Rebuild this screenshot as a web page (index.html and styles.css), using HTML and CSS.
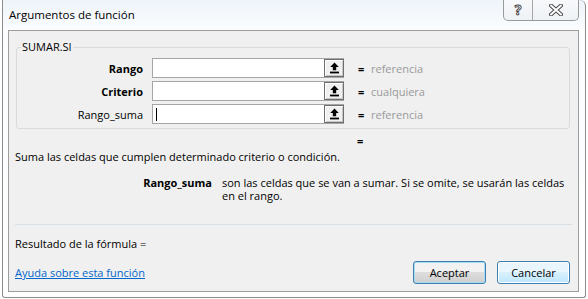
FILE: index.html
```html
<!DOCTYPE html>
<html>
<head>
  <title>Argumentos de función</title>
  <link rel="stylesheet" href="styles.css">
</head>
<body>
  <div class="window">
    <div class="titlebar">
      <span class="title">Argumentos de función</span>
      <div class="caption-buttons">
        <span class="cap-btn help">?</span>
        <span class="cap-btn close">
          <svg width="16" height="12" viewBox="0 0 16 12">
            <path d="M3 1.5 L13 10.5 M13 1.5 L3 10.5" stroke="#4a4a4a" stroke-width="4" stroke-linecap="round"/>
            <path d="M3 1.5 L13 10.5 M13 1.5 L3 10.5" stroke="#fff" stroke-width="2" stroke-linecap="round"/>
          </svg>
        </span>
      </div>
    </div>

    <div class="client">
      <fieldset class="group">
        <legend>SUMAR.SI</legend>
        <div class="arg-grid">
          <label class="arg-name strong">Rango</label>
          <div class="ref-input">
            <span class="ref-btn">
              <svg width="9" height="12" viewBox="0 0 9 12"><path d="M4.5 0.5 L8.8 5 H6.2 V8.2 H2.8 V5 H0.2 Z" fill="#000"/><rect x="0" y="9.6" width="9" height="1.8" fill="#000"/></svg>
            </span>
          </div>
          <span class="eq">=</span>
          <span class="hint">referencia</span>

          <label class="arg-name strong">Criterio</label>
          <div class="ref-input">
            <span class="ref-btn">
              <svg width="9" height="12" viewBox="0 0 9 12"><path d="M4.5 0.5 L8.8 5 H6.2 V8.2 H2.8 V5 H0.2 Z" fill="#000"/><rect x="0" y="9.6" width="9" height="1.8" fill="#000"/></svg>
            </span>
          </div>
          <span class="eq">=</span>
          <span class="hint">cualquiera</span>

          <label class="arg-name">Rango_suma</label>
          <div class="ref-input">
            <span class="caret"></span>
            <span class="ref-btn">
              <svg width="9" height="12" viewBox="0 0 9 12"><path d="M4.5 0.5 L8.8 5 H6.2 V8.2 H2.8 V5 H0.2 Z" fill="#000"/><rect x="0" y="9.6" width="9" height="1.8" fill="#000"/></svg>
            </span>
          </div>
          <span class="eq">=</span>
          <span class="hint">referencia</span>
        </div>
      </fieldset>

      <div class="result-eq">=</div>
      <p class="desc">Suma las celdas que cumplen determinado criterio o condición.</p>

      <div class="arg-help">
        <span class="arg-help-name">Rango_suma</span>
        <span class="arg-help-text">son las celdas que se van a sumar. Si se omite, se usarán las celdas en el rango.</span>
      </div>

      <hr class="sep">

      <div class="formula">Resultado de la fórmula =</div>

      <div class="footer">
        <a href="#" class="help-link">Ayuda sobre esta función</a>
        <div class="actions">
          <button class="btn btn-default">Aceptar</button>
          <button class="btn btn-hot">Cancelar</button>
        </div>
      </div>
    </div>
  </div>
</body>
</html>
```

FILE: styles.css
```css
body {
  margin: 0;
  background: #fff;
  font-family: "Open Sans", "Noto Sans", sans-serif;
  font-size: 11px;
  color: #000;
}
.window {
  margin-left: 2px;
  width: 584px;
  height: 298px;
  box-sizing: border-box;
  border: 1px solid #8c8c8c;
  border-top: none;
  border-top-right-radius: 6px;
  border-bottom-left-radius: 3px;
  border-bottom-right-radius: 3px;
  background: linear-gradient(#eef4fa, #fbfdff 30px, #fff);
}
.titlebar {
  height: 30px;
  display: flex;
  justify-content: space-between;
  align-items: flex-start;
}
.title {
  padding: 7px 0 0 6px;
  line-height: 16px;
  font-size: 11.5px;
}
.caption-buttons {
  display: flex;
  margin-right: 6px;
  height: 21px;
  box-sizing: border-box;
  border: 1px solid #9a9a9a;
  border-top: none;
  border-radius: 0 0 5px 5px;
  background: linear-gradient(#f7f9fb, #eef1f5);
}
.cap-btn {
  display: flex;
  align-items: center;
  justify-content: center;
}
.help {
  width: 28px;
  border-right: 1px solid #a8a8a8;
  font-weight: bold;
  font-size: 14px;
  color: #fff;
  -webkit-text-stroke: 0.9px #3c3c3c;
  line-height: 18px;
}
.close {
  width: 45px;
}
.client {
  margin-left: 5px;
  width: 571px;
  height: 262px;
  box-sizing: border-box;
  border: 1px solid #9d9d9d;
  background: #f0f0f0;
  padding: 0 6px;
}
.group {
  margin: 9px 2px 0 1px;
  padding: 0 0 4px 0;
  border: 1px solid #dadada;
  border-radius: 3px;
}
.group legend {
  margin-left: 4px;
  padding: 0 1px;
  line-height: 14px;
}
.arg-grid {
  display: grid;
  grid-template-columns: 135px 192px 14px auto;
  grid-auto-rows: 20px;
  row-gap: 3px;
  align-items: center;
  margin-top: 4px;
}
.arg-name {
  text-align: right;
  padding-right: 9px;
}
.strong {
  font-weight: bold;
}
.ref-input {
  position: relative;
  height: 20px;
  box-sizing: border-box;
  border: 1px solid #a6a6a6;
  background: #fff;
  display: flex;
  justify-content: flex-end;
  align-items: center;
}
.ref-btn {
  width: 20px;
  height: 18px;
  box-sizing: border-box;
  border: 1px solid #6e6e6e;
  box-shadow: inset 1px 1px 0 #fff, inset -1px -1px 0 #c8c8c8;
  background: #f0f0f0;
  display: flex;
  align-items: center;
  justify-content: center;
  margin-right: -1px;
}
.caret {
  position: absolute;
  left: 3px;
  top: 3px;
  width: 1px;
  height: 13px;
  background: #000;
}
.eq {
  padding-left: 14px;
  font-weight: bold;
}
.hint {
  padding-left: 13px;
  color: #9a9a9a;
}
.result-eq {
  margin: 5px 0 0 342px;
  line-height: 14px;
  font-weight: bold;
}
.desc {
  margin: 2px 0 0;
  line-height: 14px;
}
.arg-help {
  display: flex;
  margin-top: 12px;
  line-height: 13px;
}
.arg-help-name {
  width: 197px;
  text-align: right;
  font-weight: bold;
  flex: none;
}
.arg-help-text {
  margin-left: 10px;
  width: 345px;
}
.sep {
  margin: 22px 0 0;
  border: none;
  border-top: 1px solid #d8e0e6;
}
.formula {
  margin-top: 12px;
  line-height: 14px;
}
.footer {
  display: flex;
  justify-content: space-between;
  align-items: center;
  margin: 10px 2px 0 0;
}
.help-link {
  color: #0066cc;
}
.actions {
  display: flex;
  gap: 11px;
}
.btn {
  width: 73px;
  height: 23px;
  font-family: inherit;
  font-size: 11px;
  border: 1px solid #3c7fb1;
  border-radius: 3px;
  padding: 0;
  color: #000;
}
.btn-default {
  background: linear-gradient(#f2f2f2 50%, #dddddd 50%, #cfcfcf);
  box-shadow: inset 0 0 0 1px #a8dcf5;
}
.btn-hot {
  background: linear-gradient(#eaf6fd 50%, #d9f0fc 50%, #bee6fd);
  box-shadow: inset 0 0 0 1px #fff;
}
```
